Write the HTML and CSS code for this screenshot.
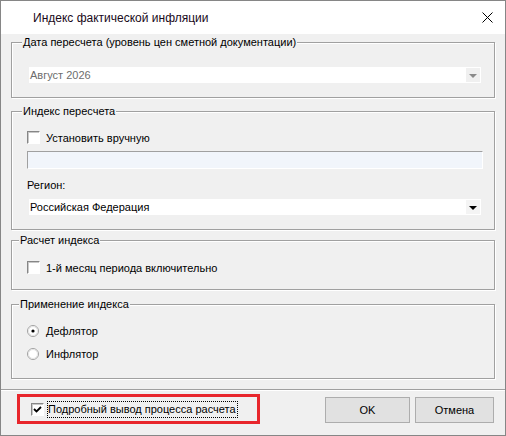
FILE: index.html
```html
<!DOCTYPE html>
<html lang="ru">
<head>
  <meta charset="UTF-8">
  <title>Индекс фактической инфляции</title>
  <link rel="stylesheet" href="styles.css">
</head>
<body>
  <div class="dialog">
    <div class="titlebar">
      <span class="title">Индекс фактической инфляции</span>
      <svg class="close" width="11" height="11" viewBox="0 0 11 11">
        <path d="M0.5 0.5 L10.5 10.5 M10.5 0.5 L0.5 10.5" stroke="#000" stroke-width="1" fill="none"/>
      </svg>
    </div>

    <div class="content">
      <fieldset class="group g1">
        <legend>Дата пересчета (уровень цен сметной документации)</legend>
        <div class="group-body">
          <div class="combo disabled">
            <span class="combo-text">Август 2026</span>
            <span class="combo-btn"><span class="arrow"></span></span>
          </div>
        </div>
      </fieldset>

      <fieldset class="group g2">
        <legend>Индекс пересчета</legend>
        <div class="group-body">
          <div class="check-row">
            <span class="checkbox"></span>
            <span>Установить вручную</span>
          </div>
          <div class="textbox"></div>
          <div class="field-label">Регион:</div>
          <div class="combo">
            <span class="combo-text">Российская Федерация</span>
            <span class="combo-btn"><span class="arrow"></span></span>
          </div>
        </div>
      </fieldset>

      <fieldset class="group g3">
        <legend class="legend-near">Расчет индекса</legend>
        <div class="group-body">
          <div class="check-row">
            <span class="checkbox"></span>
            <span>1-й месяц периода включительно</span>
          </div>
        </div>
      </fieldset>

      <fieldset class="group g4">
        <legend class="legend-near">Применение индекса</legend>
        <div class="group-body radios">
          <div class="radio-row">
            <svg class="radio" width="12" height="12" viewBox="0 0 12 12">
              <circle cx="6" cy="6" r="5.5" fill="#fff" stroke="#a0a0a0"/>
              <circle cx="6" cy="6" r="4.5" fill="#fff" stroke="#e3e3e3"/>
              <circle cx="6" cy="6" r="1.6" fill="#000"/>
            </svg>
            <span>Дефлятор</span>
          </div>
          <div class="radio-row">
            <svg class="radio" width="12" height="12" viewBox="0 0 12 12">
              <circle cx="6" cy="6" r="5.5" fill="#fff" stroke="#a0a0a0"/>
              <circle cx="6" cy="6" r="4.5" fill="#fff" stroke="#e3e3e3"/>
            </svg>
            <span>Инфлятор</span>
          </div>
        </div>
      </fieldset>
    </div>

    <div class="footer">
      <div class="highlight">
        <span class="checkbox checked">
          <svg width="9" height="9" viewBox="0 0 9 9">
            <path d="M1 4 L3.5 6.5 L8 2" stroke="#000" stroke-width="1.8" fill="none"/>
          </svg>
        </span>
        <span class="focus-label">Подробный вывод процесса расчета</span>
      </div>
      <div class="buttons">
        <button class="btn btn-ok">OK</button>
        <button class="btn btn-cancel">Отмена</button>
      </div>
    </div>
  </div>
</body>
</html>
```

FILE: styles.css
```css
body {
  margin: 0;
  font-family: 'Liberation Sans', Arial, sans-serif;
  font-size: 11px;
  color: #000;
  background: #fff;
}
.dialog {
  width: 506px;
  height: 436px;
  box-sizing: border-box;
  border: 1px solid #868686;
  background: #f0f0f0;
  display: flex;
  flex-direction: column;
}
.titlebar {
  height: 33px;
  flex-shrink: 0;
  background: #fff;
  display: flex;
  align-items: center;
  padding: 0 12px 0 32px;
}
.titlebar .title {
  flex: 1;
  font-size: 12px;
  color: #1a0a1a;
}
.content {
  padding: 1px 10px 0 10px;
}
.group {
  margin: 0;
  padding: 0 11px 0 10px;
  min-width: 0;
  box-sizing: border-box;
  border: 1px solid #a0a0a0;
  box-shadow: inset 1px 1px 0 #fff, 1px 1px 0 #fff;
}
.group legend {
  padding: 0 1px;
  line-height: 15px;
  background: #f0f0f0;
}
.group legend.legend-near {
  margin-left: -3px;
}
.group-body {
  padding-left: 5px;
}
.g1 { height: 63px; }
.g1 .group-body { padding-top: 17px; }
.g2 { height: 126px; margin-top: 6px; }
.g2 .group-body { padding-top: 12px; }
.g3 { height: 57px; margin-top: 3px; }
.g3 .group-body { padding-top: 13px; }
.g4 { height: 82px; margin-top: 7px; }
.g4 .group-body { padding-top: 12px; }

.combo {
  margin-left: 2px;
  width: 452px;
  height: 16px;
  box-sizing: border-box;
  padding: 1px;
  background: #fff;
  display: flex;
  align-items: center;
}
.combo-text {
  flex: 1;
  padding-left: 0;
}
.combo.disabled .combo-text {
  color: #6d6d6d;
}
.combo-btn {
  width: 14px;
  height: 14px;
  background: #f4f4f4;
  display: flex;
  align-items: center;
  justify-content: center;
}
.combo .arrow {
  width: 0;
  height: 0;
  border-left: 4px solid transparent;
  border-right: 4px solid transparent;
  border-top: 4px solid #000;
  margin-top: 1px;
}
.combo.disabled .arrow {
  border-top-color: #8a8a8a;
}
.combo.disabled .combo-btn {
  background: #f0f0f0;
}

.check-row,
.radio-row {
  display: flex;
  align-items: center;
  height: 13px;
}
.checkbox {
  width: 13px;
  height: 13px;
  box-sizing: border-box;
  background: #fff;
  border-top: 1px solid #868686;
  border-left: 1px solid #868686;
  border-right: 1px solid #fff;
  border-bottom: 1px solid #fff;
  box-shadow: inset 1px 1px 0 #c8c8c8;
  margin-right: 6px;
  flex-shrink: 0;
  display: flex;
  align-items: center;
  justify-content: center;
}
.radio {
  margin-right: 7px;
  flex-shrink: 0;
}
.radios .radio-row + .radio-row {
  margin-top: 10px;
}
.textbox {
  margin-top: 7px;
  width: 456px;
  height: 18px;
  box-sizing: border-box;
  background: #f1f5fb;
  border-top: 1px solid #a0a0a0;
  border-left: 1px solid #a0a0a0;
  border-right: 1px solid #fff;
  border-bottom: 1px solid #fff;
}
.field-label {
  margin-top: 9px;
  line-height: 14px;
  margin-bottom: 7px;
}

.footer {
  margin-top: 10px;
  flex: 1;
  border-top: 1px solid #a0a0a0;
  box-shadow: inset 0 1px 0 #fff;
  display: flex;
  align-items: flex-start;
  padding: 4px 11px 0 16px;
}
.highlight {
  width: 243px;
  height: 30px;
  box-sizing: border-box;
  border: 3px solid #e8262c;
  display: flex;
  align-items: center;
  padding-left: 11px;
}
.highlight .checkbox {
  margin-right: 3px;
}
.focus-label {
  border: 1px dotted #000;
  padding: 1px 1px 1px 0;
  line-height: 13px;
}
.buttons {
  margin-left: auto;
  margin-top: 3px;
  display: flex;
  gap: 5px;
}
.btn {
  height: 26px;
  border: 1px solid #adadad;
  background: #e1e1e1;
  font-family: 'Liberation Sans', Arial, sans-serif;
  font-size: 11px;
  color: #000;
  padding: 0;
}
.btn-ok { width: 85px; }
.btn-cancel { width: 79px; }
```
